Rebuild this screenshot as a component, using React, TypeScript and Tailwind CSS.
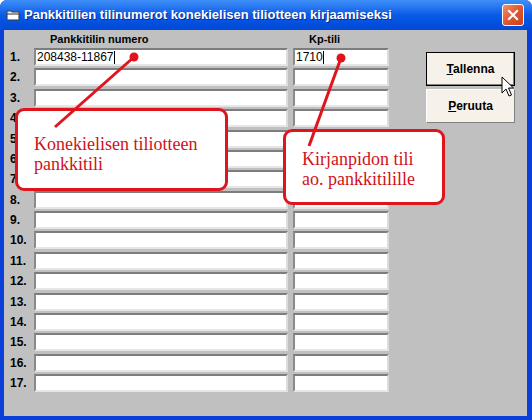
import React from "react";

const ROWS = Array.from({ length: 17 }, (_, i) => i + 1);

function Field({ w, value }: { w: string; value?: string }) {
  return (
    <div
      className={`${w} h-[18px] bg-white border-2 border-t-[#7d7d7d] border-l-[#8a8a8a] border-r-[#dcdcdc] border-b-[#e6e6e6] flex items-center pl-[1px] text-[12px] leading-none text-black`}
    >
      {value && (
        <>
          <span>{value}</span>
          <span className="w-px h-[13px] bg-black" />
        </>
      )}
    </div>
  );
}

function Callout({ className, lines }: { className: string; lines: string[] }) {
  return (
    <div
      className={`absolute bg-white border-[3px] border-[#e0141c] rounded-[9px] text-[#d0121a] text-[18px] leading-[20px] ${className}`}
      style={{ fontFamily: '"Liberation Serif", "Times New Roman", serif' }}
    >
      {lines.map((l) => (
        <div key={l}>{l}</div>
      ))}
    </div>
  );
}

export default function App() {
  return (
    <div
      className="relative w-[532px] h-[420px] flex flex-col bg-[#0a3fd8] rounded-t-[7px] overflow-hidden"
      style={{ fontFamily: '"Liberation Sans", Arial, sans-serif' }}
    >
      {/* Title bar */}
      <div className="h-[30px] shrink-0 flex items-center pl-[6px] pr-[8px] bg-gradient-to-b from-[#3f8ff8] via-[#0a5ae8] to-[#0148d6]">
        <svg width="14" height="12" viewBox="0 0 14 12" className="mr-[4px]">
          <path d="M1 2h4l1 1h7v8H1z" fill="#e8e8e8" stroke="#404040" strokeWidth="1" />
          <path d="M1 5h12" stroke="#404040" />
          <rect x="2" y="6" width="10" height="4" fill="#ffffff" />
        </svg>
        <span className="text-white font-bold text-[13px] [text-shadow:1px_1px_0_#0a2a8a]">
          Pankkitilien tilinumerot konekielisen tiliotteen kirjaamiseksi
        </span>
        <div className="ml-auto w-[22px] h-[22px] rounded-[3px] border border-white bg-gradient-to-br from-[#f0906e] via-[#e0562e] to-[#c8401c] flex items-center justify-center">
          <svg width="12" height="12" viewBox="0 0 12 12">
            <path d="M2 2l8 8M10 2l-8 8" stroke="white" strokeWidth="2.2" strokeLinecap="square" />
          </svg>
        </div>
      </div>

      {/* Body */}
      <div className="flex-1 ml-[4px] mr-[5px] mb-[4px] bg-[#c0c0c0] flex">
        <div className="pl-[6px] pt-[1px]">
          <div className="flex h-[17px] items-center text-[11px] font-bold text-black">
            <div className="w-[24px]" />
            <div className="w-[254px] pl-[16px]">Pankkitilin numero</div>
            <div className="w-[5px]" />
            <div className="pl-[16px]">Kp-tili</div>
          </div>
          <div className="flex flex-col gap-[2.375px]">
            {ROWS.map((n) => (
              <div key={n} className="flex items-center h-[18px]">
                <div className="w-[24px] text-[12px] font-bold text-black leading-none">{n}.</div>
                <Field w="w-[254px]" value={n === 1 ? "208438-11867" : undefined} />
                <div className="w-[5px]" />
                <Field w="w-[96px]" value={n === 1 ? "1710" : undefined} />
              </div>
            ))}
          </div>
        </div>

        <div className="ml-[37px] pt-[22px] flex flex-col gap-[3px]">
          <div className="w-[89px] h-[34px] border border-black bg-[#f6f2ea] flex items-center justify-center text-[12px] font-bold text-black shadow-[inset_-1px_-1px_0_#808080]">
            <span>
              <span className="underline">T</span>allenna
            </span>
          </div>
          <div className="w-[89px] h-[34px] bg-[#f6f2ea] border border-t-white border-l-white border-r-[#808080] border-b-[#808080] flex items-center justify-center text-[12px] font-bold text-black">
            <span>
              <span className="underline">P</span>eruuta
            </span>
          </div>
        </div>
      </div>

      {/* Annotations */}
      <Callout className="left-[15px] top-[108px] w-[213px] h-[83px] pl-[16px] pt-[23px]" lines={["Konekielisen tiliotteen", "pankkitili"]} />
      <Callout className="left-[283px] top-[129px] w-[162px] h-[76px] pl-[16px] pt-[17px]" lines={["Kirjanpidon tili", "ao. pankkitilille"]} />
      <svg className="absolute inset-0 pointer-events-none" width="532" height="420">
        <line x1="55" y1="127" x2="134" y2="57" stroke="#e0141c" strokeWidth="3" />
        <circle cx="134" cy="57" r="4.5" fill="#e0141c" />
        <line x1="309" y1="146" x2="341" y2="58" stroke="#e0141c" strokeWidth="3" />
        <circle cx="341" cy="58" r="4.5" fill="#e0141c" />
        <path
          d="M502 77 L502 93 L506 89 L509 96 L511.5 95 L508.5 88 L513.5 88 Z"
          fill="white"
          stroke="black"
          strokeWidth="1"
          strokeLinejoin="round"
        />
      </svg>
    </div>
  );
}
